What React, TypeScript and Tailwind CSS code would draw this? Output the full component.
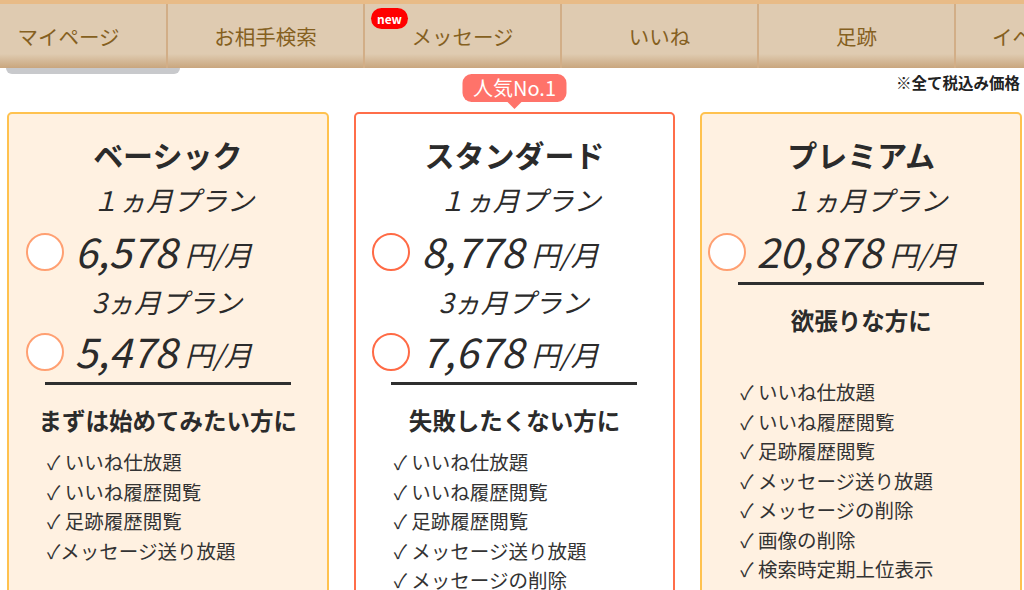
const navItems = ["マイページ", "お相手検索", "メッセージ", "いいね", "足跡", "イベント情報"];

type Price = { label: string; amount: string };

type Plan = {
  name: string;
  prices: Price[];
  lead: string;
  features: string[];
  popular?: boolean;
};

const plans: Plan[] = [
  {
    name: "ベーシック",
    prices: [
      { label: "１ヵ月プラン", amount: "6,578" },
      { label: "3ヵ月プラン", amount: "5,478" },
    ],
    lead: "まずは始めてみたい方に",
    features: ["✓ いいね仕放題", "✓ いいね履歴閲覧", "✓ 足跡履歴閲覧", "✓メッセージ送り放題"],
  },
  {
    name: "スタンダード",
    prices: [
      { label: "１ヵ月プラン", amount: "8,778" },
      { label: "3ヵ月プラン", amount: "7,678" },
    ],
    lead: "失敗したくない方に",
    features: ["✓ いいね仕放題", "✓ いいね履歴閲覧", "✓ 足跡履歴閲覧", "✓ メッセージ送り放題", "✓ メッセージの削除", "✓ 画像の削除"],
    popular: true,
  },
  {
    name: "プレミアム",
    prices: [{ label: "１ヵ月プラン", amount: "20,878" }],
    lead: "欲張りな方に",
    features: [
      "✓ いいね仕放題",
      "✓ いいね履歴閲覧",
      "✓ 足跡履歴閲覧",
      "✓ メッセージ送り放題",
      "✓ メッセージの削除",
      "✓ 画像の削除",
      "✓ 検索時定期上位表示",
    ],
  },
];

function PlanCard({ plan }: { plan: Plan }) {
  const hot = plan.popular;
  return (
    <div
      className={
        hot
          ? "relative rounded-[5px] border-2 border-[#ff6e4a] bg-white pt-[18px] pb-10"
          : "relative rounded-[5px] border-2 border-[#ffc24f] bg-[#fff1e1] pt-[18px] pb-10"
      }
    >
      {hot && (
        <div className="absolute -top-[40px] left-1/2 -translate-x-1/2">
          <div className="rounded-[9px] bg-[#ff736a] px-[10px] h-[28px] leading-[28px] text-[20px] text-white whitespace-nowrap">
            人気No.1
          </div>
          <div className="mx-auto h-0 w-0 border-x-[7px] border-t-[7px] border-x-transparent border-t-[#ff736a]" />
        </div>
      )}

      {/* 見出し */}
      <div className="text-center text-[30px] font-bold leading-[45px] text-[#2b2b2b]">{plan.name}</div>

      {plan.prices.map((p, i) => (
        <div key={i}>
          <div
            className={
              i === 0
                ? "pl-[83px] text-[27px] italic leading-[45px] text-[#2b2b2b]"
                : "pl-[83px] text-[27px] italic leading-[40px] text-[#2b2b2b]"
            }
          >
            {p.label}
          </div>
          <div className="flex h-[60px] items-center justify-center pr-[58px]">
            <span
              className={
                hot
                  ? "h-[38px] w-[38px] shrink-0 rounded-full border-2 border-[#ff6a45] bg-white"
                  : "h-[38px] w-[38px] shrink-0 rounded-full border-2 border-[#ffa072] bg-white"
              }
            />
            <span className="ml-[11px] -mt-[3px] text-[41px] italic leading-none text-[#2b2b2b]">{p.amount}</span>
            <span className="ml-[8px] mt-[4px] text-[28px] italic leading-none text-[#2b2b2b]">円/月</span>
          </div>
        </div>
      ))}

      <div className="mx-auto h-[3px] w-[246px] bg-[#2f2f2f]" />

      <div className="mt-[15px] text-center text-[23.5px] font-bold leading-[41px] text-[#2b2b2b]">{plan.lead}</div>

      <ul className={plan.prices.length === 1 ? "mt-[36px] pl-[38px]" : "mt-[6px] pl-[38px]"}>
        {plan.features.map((f) => (
          <li key={f} className="text-[19.5px] leading-[29.5px] text-[#333]">
            {f}
          </li>
        ))}
      </ul>
    </div>
  );
}

export default function App() {
  return (
    <div
      className="h-[590px] w-[1024px] overflow-hidden bg-white"
      style={{ fontFamily: '"Noto Sans CJK JP", "Noto Sans", sans-serif' }}
    >
      {/* グローバルナビ */}
      <div className="border-t-4 border-[#e8bb87] overflow-hidden">
        <nav className="-ml-[29px] flex h-[64px] bg-[linear-gradient(to_bottom,#dfcbb1_0%,#dfcbb1_78%,#c9a67e_100%)]">
          {navItems.map((item, i) => (
            <div
              key={item}
              className="relative flex h-full w-[197px] shrink-0 items-center justify-center border-r-2 border-[#d2ae87] text-[20.5px] text-[#85601f] whitespace-nowrap"
            >
              {i === 2 && (
                <span className="absolute left-[6px] top-[4px] flex h-[21px] w-[37px] items-center justify-center rounded-full bg-[#ff0000] text-[12px] font-bold text-white">
                  new
                </span>
              )}
              {item}
            </div>
          ))}
        </nav>
      </div>

      <main className="relative">
        <div className="absolute left-[6px] top-0 h-[6px] w-[174px] rounded-b-[6px] bg-[#c8c9cc]" />
        <div className="pl-[896px] pt-[4px] text-[15.5px] font-bold leading-[20px] whitespace-nowrap text-[#222]">
          ※全て税込み価格
        </div>

        <div className="mt-[20px] ml-[7px] grid w-[1015px] grid-cols-3 gap-[25px]">
          {plans.map((p) => (
            <PlanCard key={p.name} plan={p} />
          ))}
        </div>
      </main>
    </div>
  );
}
